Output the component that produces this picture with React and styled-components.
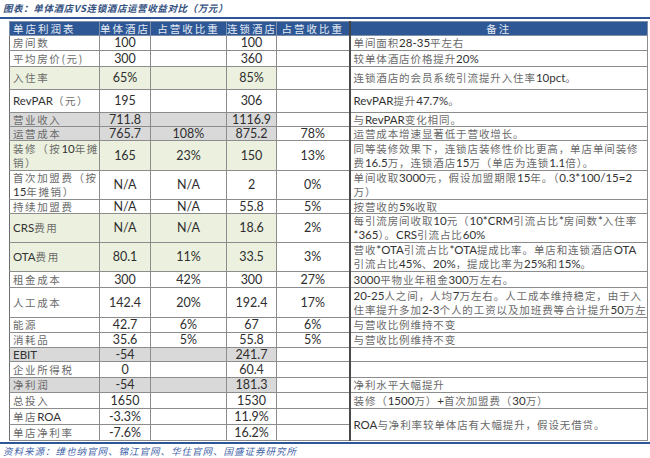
import styled, { createGlobalStyle } from "styled-components";

const GlobalStyle = createGlobalStyle`
  html, body {
    margin: 0;
    padding: 0;
    background: #ffffff;
  }
`;

const CJK = `"Noto Sans CJK SC", "Noto Sans", sans-serif`;
const LATIN = `Lato, "Noto Sans CJK SC", sans-serif`;

const tones = {
  green: "#ebf1de",
  gray: "#d9d9d9",
  plain: "#ffffff",
};

const Page = styled.div`
  width: 650px;
  height: 458px;
  overflow: hidden;
  display: flex;
  flex-direction: column;
  background: #fff;
`;

const Title = styled.div`
  height: 17px;
  line-height: 17px;
  padding-left: 3px;
  font-family: ${CJK};
  font-size: 9.5px;
  font-weight: 700;
  font-style: italic;
  color: #34517f;
  letter-spacing: 0.6px;
`;

const Rule = styled.div`
  flex: none;
  height: 2px;
  background: #2d5697;
  margin-bottom: ${(p) => p.$gap || 0}px;
`;

const Table = styled.table`
  flex: none;
  margin-left: 9px;
  width: 638px;
  table-layout: fixed;
  border-collapse: collapse;
  margin-bottom: 1px;
`;

const HeadCell = styled.th`
  height: 13px;
  padding: 0;
  background: #2e5895;
  color: #e4eaf4;
  font-family: ${CJK};
  font-size: 10.5px;
  line-height: 12px;
  font-weight: 400;
  letter-spacing: 2px;
  text-align: ${(p) => p.$align || "center"};
  padding-left: ${(p) => (p.$align === "left" ? 3 : 0)}px;
  border: 1px solid #7f8fa8;
  border-left: ${(p) => (p.$note ? "2px solid #444" : "1px solid #7f8fa8")};
  white-space: nowrap;
  overflow: hidden;
`;

const Row = styled.tr`
  height: ${(p) => p.$h}px;
`;

const Cell = styled.td`
  padding: 0 3px;
  background: ${(p) => tones[p.$tone || "plain"]};
  border: 1px solid #8c8c8c;
  border-left: ${(p) => (p.$note ? "2px solid #4a4a4a" : "1px solid #6f6f6f")};
  text-align: ${(p) => p.$align || "center"};
  vertical-align: middle;
  font-family: ${CJK};
  font-size: 10.5px;
  line-height: ${(p) => (p.$multi ? 14 : 12)}px;
  letter-spacing: ${(p) => (p.$note ? 0.9 : 1.6)}px;
  color: #6a6a6a;
  white-space: nowrap;
  overflow: hidden;
`;

const Num = styled.span`
  font-family: ${LATIN};
  font-size: 12.5px;
  line-height: 12px;
  letter-spacing: 0;
  color: #2e2e2e;
`;

const Lat = styled.span`
  font-family: ${LATIN};
  font-size: 11.5px;
  line-height: 12px;
  letter-spacing: 0;
  color: #333;
`;

const Source = styled.div`
  flex: none;
  height: 12px;
  line-height: 12px;
  margin-top: 1px;
  padding-left: 3px;
  font-family: ${CJK};
  font-size: 9.5px;
  font-style: italic;
  color: #3f63a8;
  letter-spacing: 1px;
`;

// split text so latin runs get the calibri-like face
const Mixed = ({ text }) => {
  const lines = text.split("\n");
  return lines.map((line, li) => (
    <span key={li}>
      {li > 0 && <br />}
      {line
        .split(/([A-Za-z0-9.%*+\-\/=]+)/)
        .map((part, i) => (i % 2 ? <Lat key={i}>{part}</Lat> : part))}
    </span>
  ));
};

const heads = ["单店利润表", "单体酒店", "占营收比重", "连锁酒店", "占营收比重", "备注"];
const widths = [90, 51, 76, 50, 73, 298];

const rows = [
  { label: "房间数", a: "100", b: "100", note: "单间面积28-35平左右", h: 15 },
  { label: "平均房价(元)", a: "300", b: "360", note: "较单体酒店价格提升20%", h: 16 },
  { label: "入住率", a: "65%", b: "85%", note: "连锁酒店的会员系统引流提升入住率10pct。", h: 23, tone: "green" },
  { label: "RevPAR（元）", a: "195", b: "306", note: "RevPAR提升47.7%。", h: 23 },
  { label: "营业收入", a: "711.8", b: "1116.9", note: "与RevPAR变化相同。", h: 14, tone: "gray" },
  { label: "运营成本", a: "765.7", ap: "108%", b: "875.2", bp: "78%", note: "运营成本增速显著低于营收增长。", h: 14, tone: "gray" },
  {
    label: "装修（按10年摊\n销）", a: "165", ap: "23%", b: "150", bp: "13%",
    note: "同等装修效果下，连锁店装修性价比更高，单店单间装修\n费16.5万，连锁酒店15万（单店为连锁1.1倍）。",
    h: 30, tone: "green",
  },
  {
    label: "首次加盟费（按\n15年摊销）", a: "N/A", ap: "N/A", b: "2", bp: "0%",
    note: "单间收取3000元，假设加盟期限15年。（0.3*100/15=2\n万）", h: 29,
  },
  { label: "持续加盟费", a: "N/A", ap: "N/A", b: "55.8", bp: "5%", note: "按营收的5%收取", h: 14 },
  {
    label: "CRS费用", a: "N/A", ap: "N/A", b: "18.6", bp: "2%",
    note: "每引流房间收取10元（10*CRM引流占比*房间数*入住率\n*365）。CRS引流占比60%", h: 29, tone: "green",
  },
  {
    label: "OTA费用", a: "80.1", ap: "11%", b: "33.5", bp: "3%",
    note: "营收*OTA引流占比*OTA提成比率。单店和连锁酒店OTA\n引流占比45%、20%，提成比率为25%和15%。", h: 29, tone: "green",
  },
  { label: "租金成本", a: "300", ap: "42%", b: "300", bp: "27%", note: "3000平物业年租金300万左右。", h: 16 },
  {
    label: "人工成本", a: "142.4", ap: "20%", b: "192.4", bp: "17%",
    note: "20-25人之间，人均7万左右。人工成本维持稳定，由于入\n住率提升多加2-3个人的工资以及加班费等合计提升50万左", h: 30,
  },
  { label: "能源", a: "42.7", ap: "6%", b: "67", bp: "6%", note: "与营收比例维持不变", h: 15 },
  { label: "消耗品", a: "35.6", ap: "5%", b: "55.8", bp: "5%", note: "与营收比例维持不变", h: 15 },
  { label: "EBIT", a: "-54", b: "241.7", note: "", h: 14, tone: "gray" },
  { label: "企业所得税", a: "0", b: "60.4", note: "", h: 16 },
  { label: "净利润", a: "-54", b: "181.3", note: "净利水平大幅提升", h: 15, tone: "gray" },
  { label: "总投入", a: "1650", b: "1530", note: "装修（1500万）+首次加盟费（30万）", h: 16 },
  { label: "单店ROA", a: "-3.3%", b: "11.9%", note: "ROA与净利率较单体店有大幅提升，假设无借贷。", h: 16, span: 2 },
  { label: "单店净利率", a: "-7.6%", b: "16.2%", h: 16, merged: true },
];

const App = () => {
  return (
    <Page>
      <GlobalStyle />
      <Title>图表：单体酒店VS连锁酒店运营收益对比（万元）</Title>
      <Rule $gap={2} />
      <Table>
        <colgroup>
          {widths.map((w, i) => (
            <col key={i} style={{ width: w }} />
          ))}
        </colgroup>
        <thead>
          <tr>
            {heads.map((h, i) => (
              <HeadCell key={i} $align={i === 0 ? "left" : "center"} $note={i === 5}>
                {h}
              </HeadCell>
            ))}
          </tr>
        </thead>
        <tbody>
          {rows.map((r, i) => {
            const multi = r.label.includes("\n") || (r.note || "").includes("\n");
            return (
              <Row key={i} $h={r.h}>
                <Cell $align="left" $tone={r.tone} $multi={multi}>
                  <Mixed text={r.label} />
                </Cell>
                <Cell $tone={r.tone}><Num>{r.a}</Num></Cell>
                <Cell $tone={r.tone}><Num>{r.ap}</Num></Cell>
                <Cell $tone={r.tone}><Num>{r.b}</Num></Cell>
                <Cell><Num>{r.bp}</Num></Cell>
                {!r.merged && (
                  <Cell $align="left" $note $multi={multi} rowSpan={r.span || 1}>
                    <Mixed text={r.note} />
                  </Cell>
                )}
              </Row>
            );
          })}
        </tbody>
      </Table>
      <Rule />
      <Source>资料来源：维也纳官网、锦江官网、华住官网、国盛证券研究所</Source>
    </Page>
  );
};

export default App;
